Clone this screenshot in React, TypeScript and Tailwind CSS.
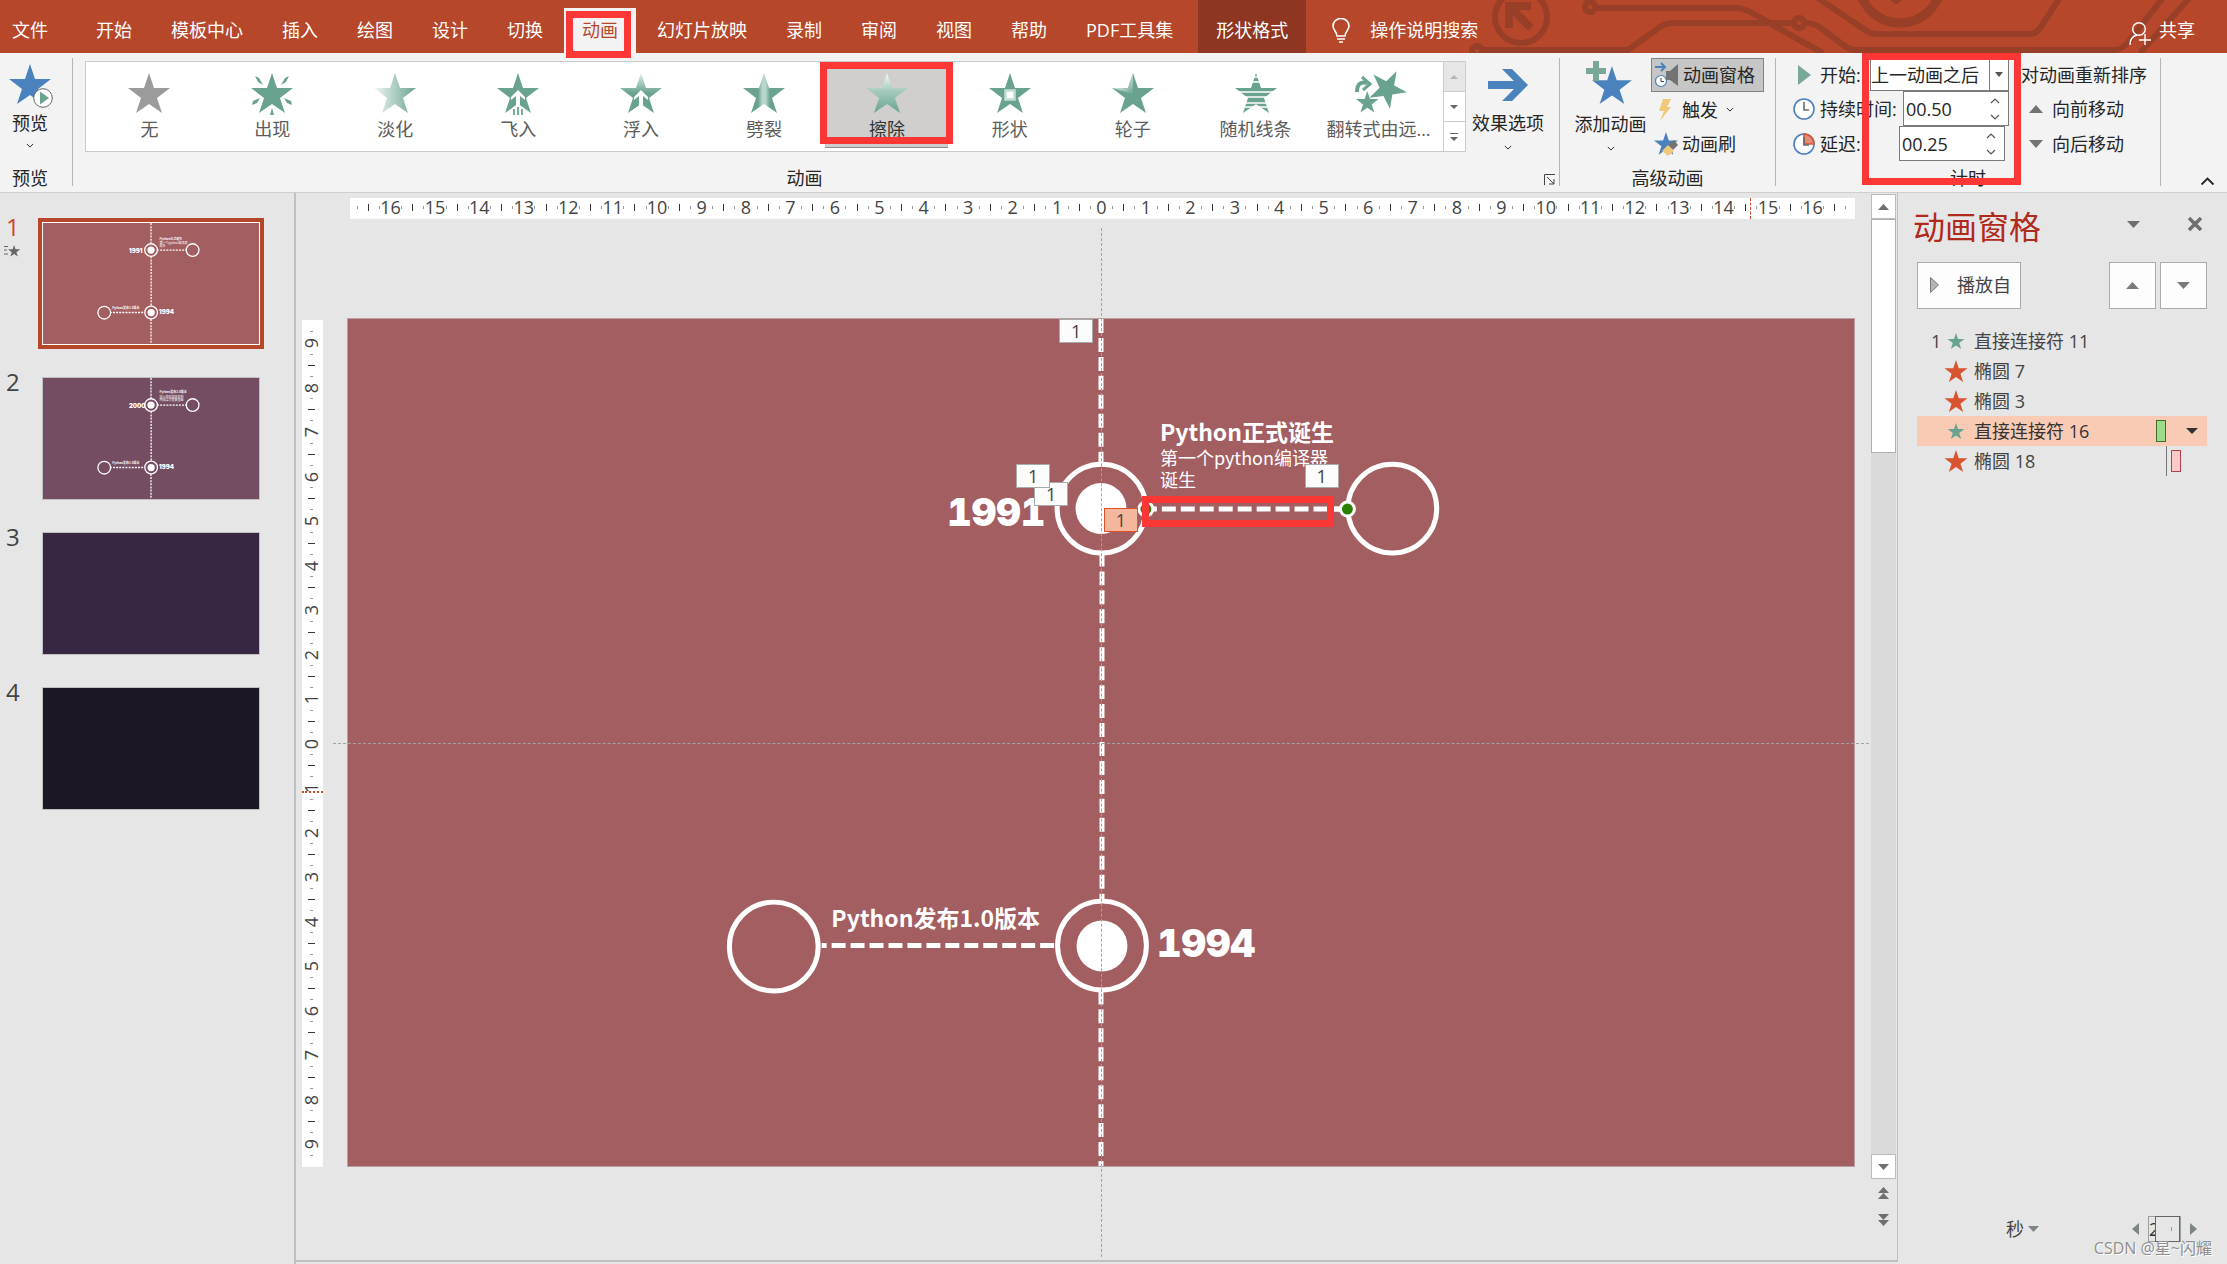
import React from "react";

const STAR = "21,0 26,15 42,15 29,25 34,40 21,31 8,40 13,25 0,15 16,15";
const GREEN = "#69a390";

function Star({ fill, className }: { fill: string; className: string }) {
  return (
    <svg viewBox="0 0 42 40" className={className} aria-hidden="true">
      <polygon points={STAR} fill={fill} />
    </svg>
  );
}

function Tri({ dir, className }: { dir: "up" | "down" | "left" | "right"; className: string }) {
  const points = {
    up: "0,10 5,0 10,10",
    down: "0,0 10,0 5,10",
    left: "10,0 10,10 0,5",
    right: "0,0 10,5 0,10",
  }[dir];
  return (
    <svg viewBox="0 0 10 10" preserveAspectRatio="none" className={className} aria-hidden="true">
      <polygon points={points} fill="currentColor" />
    </svg>
  );
}

function Chevron({ up, className }: { up?: boolean; className: string }) {
  return (
    <svg viewBox="0 0 10 6" className={className} fill="none" stroke="currentColor" strokeWidth="1.2" aria-hidden="true">
      <path d={up ? "M1 5 5 1 9 5" : "M1 1 5 5 9 1"} />
    </svg>
  );
}

type Effect = { name: string; art: React.ReactNode };

const plain = (fill: string) => <polygon points={STAR} fill={fill} />;

const EFFECTS: Effect[] = [
  { name: "无", art: plain("#9b9b9b") },
  {
    name: "出现",
    art: (
      <g fill={GREEN}>
        <polygon points={STAR} />
        <path d="M4 3 8 5 12 12 7 9ZM38 3 34 5 30 12 35 9ZM1 32 2 28 9 25 6 30ZM41 32 40 28 33 25 36 30ZM21 35 23 42H19Z" />
      </g>
    ),
  },
  {
    name: "淡化",
    art: (
      <>
        <defs>
          <linearGradient id="fade">
            <stop offset="0" stopColor="#f0f6f4" />
            <stop offset="1" stopColor={GREEN} />
          </linearGradient>
        </defs>
        {plain("url(#fade)")}
      </>
    ),
  },
  {
    name: "飞入",
    art: (
      <>
        {plain(GREEN)}
        <path d="M21 17 28 24V27L23 23V34H19V23L14 27V24Z" fill="#fff" />
        <path d="M15 35 21 31 27 35V42H15Z" fill="#fff" />
        <path d="M17 36V42M21 34V42M25 36V42" stroke={GREEN} strokeWidth="1.800" />
      </>
    ),
  },
  {
    name: "浮入",
    art: (
      <>
        <defs>
          <linearGradient id="float" x2="0" y2="1">
            <stop offset="0" stopColor="#e3efeb" />
            <stop offset=".5" stopColor={GREEN} />
          </linearGradient>
        </defs>
        {plain("url(#float)")}
        <path d="M21 17 28 24V27L23 23V33H19V23L14 27V24Z" fill="#fff" />
      </>
    ),
  },
  {
    name: "劈裂",
    art: (
      <>
        <defs>
          <linearGradient id="split">
            <stop offset=".36" stopColor={GREEN} />
            <stop offset=".46" stopColor="#b9d6cc" />
            <stop offset=".54" stopColor="#b9d6cc" />
            <stop offset=".64" stopColor={GREEN} />
          </linearGradient>
        </defs>
        {plain("url(#split)")}
      </>
    ),
  },
  {
    name: "擦除",
    art: (
      <>
        <defs>
          <linearGradient id="wipe" x2="0" y2="1">
            <stop offset="0" stopColor="#f4f8f6" />
            <stop offset=".45" stopColor="#a5cbbd" />
            <stop offset="1" stopColor={GREEN} />
          </linearGradient>
        </defs>
        {plain("url(#wipe)")}
      </>
    ),
  },
  {
    name: "形状",
    art: (
      <>
        {plain(GREEN)}
        <rect x="16.500" y="17.500" width="9" height="9" fill="#fff" stroke="#c5ddd5" strokeWidth="2.500" />
      </>
    ),
  },
  {
    name: "轮子",
    art: (
      <>
        <defs>
          <linearGradient id="wheel" x1="0" y1="0" x2="1" y2="1">
            <stop offset=".3" stopColor="#eaf3f0" />
            <stop offset="1" stopColor={GREEN} />
          </linearGradient>
        </defs>
        {plain(GREEN)}
        <path d="M21 0V21L0 15H16Z" fill="url(#wheel)" />
      </>
    ),
  },
  {
    name: "随机线条",
    art: (
      <>
        {plain(GREEN)}
        <path d="M0 4H42M0 9H42M0 19H42M0 24H42M0 30H42M0 34H42" stroke="#fff" strokeWidth="1.3" />
      </>
    ),
  },
  {
    name: "翻转式由远…",
    art: (
      <>
        <polygon points={STAR} fill={GREEN} transform="translate(10 -3) rotate(28 21 20) scale(.9)" />
        <polygon points={STAR} fill={GREEN} transform="translate(-2 18) scale(.54)" />
        <path d="M-1 19C-1 11 3 8 9 10" fill="none" stroke={GREEN} strokeWidth="4" />
        <path d="M4 4 12 11 5 17" fill="none" stroke={GREEN} strokeWidth="3" />
      </>
    ),
  },
];

const TABS = ["开始", "模板中心", "插入", "绘图", "设计", "切换", "动画", "幻灯片放映", "录制", "审阅", "视图", "帮助", "PDF工具集"];

function TitleBar() {
  return (
    <header className="relative flex h-[53px] bg-[#b7472a] text-white">
      <svg viewBox="0 0 767 53" className="absolute right-0 top-0 h-[53px] w-[767px]" fill="none" stroke="#993f28" strokeWidth="6" aria-hidden="true">
        <circle cx="61" cy="17" r="26" />
        <path d="M71 6H49V28M49 6 71 28" strokeWidth="8" />
        <circle cx="130" cy="7" r="5" />
        <path d="M136 8H275C290 8 298 18 363 53" />
        <path d="M22 50H168L200 27Q206 23 212 23H334" />
        <circle cx="17" cy="51" r="5" />
        <circle cx="339" cy="23" r="5" />
        <path d="M345 23Q355 23 362 29L386 47Q390 50 396 50H655Q662 50 670 40L705-5" />
        <path d="M352-6 405 30Q410 34 416 34H570Q576 34 580 28L605-10" />
        <path d="M680 53 732-5" />
        <circle cx="440" cy="-18" r="41" strokeWidth="9" />
        <path d="M428-4 436 2 448-6M454-2H462V-8" strokeWidth="4" />
      </svg>
      <nav className="relative flex gap-[3px]" aria-label="功能区选项卡">
        <button className="pb-3 pl-3 pr-[27px] pt-[18px] text-lg leading-6">文件</button>
        {TABS.map((t) =>
          t === "动画" ? (
            <button key={t} className="relative z-20 mt-2 bg-[#f3f3f3] px-[18px] pb-[11px] pt-[10px] text-lg leading-6 text-[#b7472a]">
              {t}
              <span className="absolute left-[2px] top-[3px] h-[47px] w-[65px] border-[7px] border-[#fd3735]" />
            </button>
          ) : (
            <button key={t} className="px-[18px] pb-3 pt-[18px] text-lg leading-6">{t}</button>
          ),
        )}
        <button className="ml-[4px] bg-[#8e3621] px-[18px] pb-3 pt-[18px] text-lg leading-6">形状格式</button>
        <button className="flex gap-5 pb-3 pl-[23px] pt-[18px] text-lg leading-6">
          <svg viewBox="0 0 18 25" className="h-[25px] w-[18px]" fill="none" stroke="#fff" strokeWidth="1.6" aria-hidden="true">
            <path d="M5 18C5 14 1 12 1 8A8 7.500 0 0 1 17 8C17 12 13 14 13 18ZM5 21H13M7 24H11" />
          </svg>
          操作说明搜索
        </button>
      </nav>
      <button className="relative ml-auto mr-8 flex gap-2 pb-3 pt-[18px] text-lg leading-6">
        <svg viewBox="0 0 22 24" className="mt-1 h-6 w-[22px]" fill="none" stroke="#fff" strokeWidth="1.4" aria-hidden="true">
          <circle cx="10" cy="7" r="6.300" />
          <path d="M1 23C1 17 4 14 8 13M16 12V23M10 18H22" />
        </svg>
        共享
      </button>
    </header>
  );
}

function GroupLabel({ children }: { children: React.ReactNode }) {
  return <div className="mb-px mt-auto text-center text-lg leading-[14px]">{children}</div>;
}

function Clock({ red }: { red?: boolean }) {
  return (
    <svg viewBox="0 0 22 22" className="size-[22px]" fill="none" strokeWidth="1.600" aria-hidden="true">
      <circle cx="11" cy="11" r="10" stroke="#4a82bd" fill="#fff" />
      {red && <path d="M11 1A10 10 0 0 1 21 11H11Z" fill="#e58c77" stroke="#d0573c" />}
      <path d="M11 4V12H16" stroke="#6b6b6b" />
    </svg>
  );
}

function Spinner({ id, value }: { id: string; value: string }) {
  return (
    <span className="flex h-[35px] w-[106px] items-center border border-[#7a7a7a] bg-white">
      <input id={id} defaultValue={value} className="w-[84px] pl-0.5 text-lg outline-none" />
      <span className="flex flex-col gap-2.5 pl-0.5 text-[#555]">
        <button className="flex" aria-label="增加"><Chevron up className="h-[6px] w-[10px]" /></button>
        <button className="flex" aria-label="减少"><Chevron className="h-[6px] w-[10px]" /></button>
      </span>
    </span>
  );
}

function Ribbon() {
  return (
    <section className="relative flex h-[140px] border-b border-[#cfcfcf] bg-[#f3f3f3] pb-[6px] pt-[5px] text-[#262626]">
      <div className="flex w-[73px] flex-col border-r border-[#b5b5b5] pr-3">
        <button className="flex flex-col items-center text-lg leading-6">
          <span className="relative mt-1.5 h-[47px] w-[42px]">
            <Star fill="#4a82bd" className="h-10 w-[42px]" />
            <svg viewBox="0 0 20 20" className="absolute -right-[2px] top-6 size-5" aria-hidden="true">
              <circle cx="10" cy="10" r="9.300" fill="#fff" stroke="#666" />
              <path d="M7 3.500V16.500L16 10Z" fill={GREEN} />
            </svg>
          </span>
          <span>预览</span>
          <Chevron className="mt-2 h-[5px] w-2" />
        </button>
        <GroupLabel>预览</GroupLabel>
      </div>

      <div className="relative flex min-w-0 flex-1 flex-col border-r border-[#b5b5b5] pl-3">
        <div className="flex">
          <div className="mt-[3px] flex h-[91px] min-w-0 flex-1 border border-[#cbcbcb] bg-white pl-[2px]">
            {EFFECTS.map((e, i) => (
              <button
                key={e.name}
                className={
                  i === 6
                    ? "relative mb-[3px] flex min-w-0 flex-1 flex-col items-center border-b border-[#8a8a8a] bg-[#d1cfcd] pt-[11px] text-lg leading-6 text-[#333]"
                    : "mb-[3px] flex min-w-0 flex-1 flex-col items-center pt-[11px] text-lg leading-6 text-[#5c5c5c]"
                }
              >
                <svg viewBox="0 0 42 42" className="h-[42px] w-[42px] shrink-0 overflow-visible" aria-hidden="true">{e.art}</svg>
                <span className="mt-[2px] whitespace-nowrap">{e.name}</span>
                {i === 6 && <span className="absolute -inset-x-[5px] top-0 h-[82px] border-[7px] border-[#fd3735]" />}
              </button>
            ))}
            <div className="ml-[3px] flex w-[22px] shrink-0 flex-col border-l border-[#cbcbcb]">
              <button aria-label="上一行" className="flex flex-1 items-center justify-center bg-[#e6e6e6] text-[#b5b5b5]"><Tri dir="up" className="h-1 w-2" /></button>
              <button aria-label="下一行" className="flex flex-1 items-center justify-center border-y border-[#cbcbcb] text-[#666]"><Tri dir="down" className="h-1 w-2" /></button>
              <button aria-label="其他" className="flex flex-1 flex-col items-center justify-center gap-[3px] text-[#666]">
                <span className="h-px w-2 bg-[#666]" />
                <Tri dir="down" className="h-1 w-2" />
              </button>
            </div>
          </div>
          <button className="flex w-[93px] flex-col items-center pr-[9px] text-lg leading-6">
            <svg viewBox="0 0 40 32" className="mb-[10px] mt-[11px] h-8 w-10" fill="#4a82bd" aria-hidden="true">
              <path d="M0 12H26L14 0H24L40 16 24 32H14L26 20H0Z" />
            </svg>
            效果选项
            <Chevron className="mt-[10px] h-[5px] w-2" />
          </button>
        </div>
        <div className="mb-px mt-auto flex items-end pr-1">
          <span className="flex-1 pr-5 text-center text-lg leading-[14px]">动画</span>
          <button aria-label="动画选项">
            <svg viewBox="0 0 11 11" className="size-[11px]" fill="none" stroke="#444" aria-hidden="true">
              <path d="M.5 11V.5H11M3 3 10 10M10 5V10H5" />
            </svg>
          </button>
        </div>
      </div>

      <div className="flex w-[216px] flex-col border-r border-[#b5b5b5]">
        <div className="flex">
          <button className="flex w-[91px] flex-col items-center pl-[10px] text-lg leading-6">
            <svg viewBox="0 0 46 44" className="mb-[7px] mr-1 mt-[3px] h-11 w-[46px]" aria-hidden="true">
              <polygon points={STAR} fill="#4a82bd" transform="translate(6 5) scale(.95)" />
              <path d="M7 0H13V7H20V13H13V20H7V13H0V7H7Z" fill="#79a898" />
            </svg>
            <span className="whitespace-nowrap">添加动画</span>
            <Chevron className="mt-[10px] h-[5px] w-2" />
          </button>
          <div className="flex flex-col items-start text-lg">
            <button className="flex h-[34px] items-center gap-1 border border-[#828282] bg-[#c6c6c6] pb-px pl-[3px] pr-2">
              <svg viewBox="0 0 24 26" className="h-[26px] w-6" fill="none" aria-hidden="true">
                <path d="M0 5H9M6 1 10 5 6 9" stroke="#4a82bd" strokeWidth="2" />
                <circle cx="6" cy="19" r="5.500" fill="#fff" stroke="#4a82bd" strokeWidth="1.200" />
                <path d="M6 16V19.500H9" stroke="#444" />
                <path d="M11 9H15L23 2V24L15 18H11Z" fill="#737373" />
              </svg>
              动画窗格
            </button>
            <button className="flex h-[35px] items-center gap-1 pl-[3px]">
              <svg viewBox="0 0 24 24" className="size-6" aria-hidden="true">
                <path d="M9 1H17L13 9H17L6 23 10 13H5Z" fill="#f0c879" />
              </svg>
              触发
              <Chevron className="ml-1 h-[5px] w-2" />
            </button>
            <button className="flex h-[34px] items-center gap-1 pl-[3px]">
              <svg viewBox="0 0 24 24" className="size-6" aria-hidden="true">
                <polygon points={STAR} fill="#4a82bd" transform="scale(.57)" />
                <path d="M14 13 20 8 24 13 19 18Z" fill="#737373" />
                <path d="M8 19 14 13 20 19 14 24Z" fill="#f0c879" />
              </svg>
              动画刷
            </button>
          </div>
        </div>
        <GroupLabel>高级动画</GroupLabel>
      </div>

      <div className="relative flex w-[385px] flex-col border-r border-[#b5b5b5] text-lg">
        <div className="flex gap-3 pl-[17px]">
          <div className="w-[216px]">
            <div className="flex h-[33px] items-center">
              <Tri dir="right" className="ml-[5px] h-5 w-[13px] text-[#79a898]" />
              <label htmlFor="start" className="ml-[9px] flex-1 whitespace-nowrap">开始:</label>
              <span className="relative">
                <select id="start" className="h-[33px] w-[139px] appearance-none border border-[#7a7a7a] bg-white" defaultValue="after">
                  <option value="after">上一动画之后</option>
                </select>
                <span className="pointer-events-none absolute inset-y-0 right-0 flex w-5 items-center justify-center border border-[#7a7a7a]">
                  <Tri dir="down" className="h-[5px] w-2 text-[#555]" />
                </span>
              </span>
            </div>
            <div className="flex h-[35px] items-center">
              <Clock />
              <label htmlFor="duration" className="ml-[5px] flex-1 whitespace-nowrap">持续时间:</label>
              <Spinner id="duration" value="00.50" />
            </div>
            <div className="flex h-[35px] items-center pr-1">
              <Clock red />
              <label htmlFor="delay" className="ml-[5px] flex-1 whitespace-nowrap">延迟:</label>
              <Spinner id="delay" value="00.25" />
            </div>
          </div>
          <div className="flex flex-col items-start">
            <span className="flex h-[33px] items-center whitespace-nowrap">对动画重新排序</span>
            <button className="flex h-[35px] items-center gap-[9px] pl-2"><Tri dir="up" className="h-2 w-[14px] text-[#737373]" />向前移动</button>
            <button className="flex h-[35px] items-center gap-[9px] pl-2"><Tri dir="down" className="h-2 w-[14px] text-[#737373]" />向后移动</button>
          </div>
        </div>
        <GroupLabel>计时</GroupLabel>
        <span className="pointer-events-none absolute -top-[5px] left-[86px] h-[132px] w-[159px] border-[7px] border-[#fd3735]" />
      </div>

      <div className="flex w-[66px] items-end justify-end pr-3">
        <button aria-label="折叠功能区"><Chevron up className="h-[9px] w-[15px]" /></button>
      </div>
    </section>
  );
}

type Label = { text: string; x: number; y: number; kind: "year" | "title" | "body" };

const SLIDE_W = 1508;
const SLIDE_H = 849;

const second: Label[] = [
  { text: "Python发布1.0版本", x: 484, y: 582, kind: "title" },
  { text: "1994", x: 810, y: 606, kind: "year" },
];

const LABELS: Record<number, Label[]> = {
  1: [
    { text: "1991", x: 600, y: 174, kind: "year" },
    { text: "Python正式诞生", x: 813, y: 95, kind: "title" },
    { text: "第一个python编译器", x: 813, y: 127, kind: "body" },
    { text: "诞生", x: 813, y: 149, kind: "body" },
    ...second,
  ],
  2: [
    { text: "2000", x: 600, y: 174, kind: "year" },
    { text: "Python发布2.0版本", x: 813, y: 87, kind: "title" },
    { text: "加入内存回收机制", x: 813, y: 118, kind: "body" },
    { text: "构成语言框架基础", x: 813, y: 141, kind: "body" },
    ...second,
  ],
};

const LARGE = {
  year: "font-[Inter] text-[38px] font-black leading-[38px] tabular-nums",
  title: "font-['Noto_Sans_CJK_SC',sans-serif] text-[23px] font-bold leading-[34px]",
  body: "font-['Noto_Sans_CJK_SC',sans-serif] text-lg leading-[22px]",
};
const SMALL = {
  year: "font-[Inter] text-[6px] font-black leading-[6px]",
  title: "font-['Noto_Sans_CJK_SC',sans-serif] text-[3px] font-bold leading-[5px]",
  body: "font-['Noto_Sans_CJK_SC',sans-serif] text-[3px] leading-[4px]",
};

function Timeline({ slide, large }: { slide: number; large?: boolean }) {
  const sizes = large ? LARGE : SMALL;
  return (
    <>
      <svg viewBox={`0 0 ${SLIDE_W} ${SLIDE_H}`} className="absolute inset-0 size-full" fill="none" stroke="#fff" strokeWidth={large ? 5 : 9} aria-hidden="true">
        <g strokeDasharray={large ? "14 5" : "14 8"}>
          <path d="M754 0V144" />
          <path d="M755 236V583" strokeDashoffset="2" />
          <path d="M754 673V849" />
          <path d="M801 190.500H1000" strokeDashoffset="5" />
          <path d="M474 628H708" strokeDashoffset="9" />
        </g>
        <circle cx="754.500" cy="190" r="44.500" />
        <circle cx="1046" cy="190" r="44.500" />
        <circle cx="755" cy="628" r="44.500" />
        <circle cx="426" cy="629" r="44.500" />
        <g fill="#fff" stroke="none">
          <circle cx="754" cy="190" r="25.500" />
          <circle cx="755" cy="628.500" r="25.500" />
        </g>
      </svg>
      {LABELS[slide].map((l) => (
        <span
          key={l.text}
          className={`absolute whitespace-nowrap text-white ${sizes[l.kind]}`}
          style={{ left: `${(l.x / SLIDE_W) * 100}%`, top: `${(l.y / SLIDE_H) * 100}%` }}
        >
          {l.text}
        </span>
      ))}
    </>
  );
}

const THUMBS = [
  { n: 1, bg: "bg-[#a35e62]" },
  { n: 2, bg: "bg-[#744d62]" },
  { n: 3, bg: "bg-[#382743]" },
  { n: 4, bg: "bg-[#1d1724]" },
];

function Thumbnails() {
  return (
    <aside className="flex w-[296px] flex-col gap-8 border-r-2 border-[#c0c0c0] pt-[29px]" aria-label="幻灯片">
      {THUMBS.map(({ n, bg }) => (
        <div key={n} className="flex">
          <div className={n === 1 ? "w-[42px] pl-[6px] text-2xl leading-none text-[#d24726]" : "w-[42px] pl-[6px] text-2xl leading-none text-[#444]"}>
            <div className="-mt-[7px]">{n}</div>
            {n === 1 && (
              <svg viewBox="0 0 16 12" className="-ml-0.5 mt-1.5 h-3 w-4" aria-hidden="true">
                <path d="M0 1.500H4M0 5H3M0 9H4" stroke="#666" />
                <polygon points={STAR} fill="#666" transform="translate(4 0) scale(.29)" />
              </svg>
            )}
          </div>
          <button
            aria-label={`幻灯片 ${n}`}
            className={`relative h-[123px] w-[218px] overflow-hidden border ${bg} ${n === 1 ? "border-white outline-4 outline-[#b7472a]" : "border-[#c0c0c0]"}`}
          >
            {n < 3 && <Timeline slide={n} />}
          </button>
        </div>
      ))}
    </aside>
  );
}

/* Quarter-centimetre marks counted from the middle of the ruler. */
function marks(quarters: number) {
  return Array.from({ length: quarters * 2 + 1 }, (_, i) => i - quarters);
}

function RulerMark({ q, max, vertical }: { q: number; max: number; vertical?: boolean }) {
  const a = Math.abs(q);
  if (a % 4 === 0) {
    if (a / 4 > max) return null;
    return <span className={vertical ? "-rotate-90" : ""}>{a / 4}</span>;
  }
  if (a % 2 === 0) return <span className={vertical ? "h-px w-[7px] bg-[#333]" : "h-[7px] w-px bg-[#333]"} />;
  return <span className={vertical ? "h-px w-[3px] bg-[#999]" : "h-[3px] w-px bg-[#999]"} />;
}

function HorizontalRuler() {
  return (
    <div className="relative col-start-2 ml-[3px] flex h-[21px] items-center justify-center bg-white pb-[3px] pr-0.5 text-lg leading-none text-[#444]">
      {marks(67).map((q) => (
        <span key={q} className="flex w-[0.74%] shrink-0 items-center justify-center">
          <RulerMark q={q} max={16} />
        </span>
      ))}
      <span className="absolute inset-y-0 left-[93%] border-l border-dashed border-[#d24726]" />
    </div>
  );
}

function VerticalRuler() {
  return (
    <div className="relative flex flex-col items-center justify-center bg-white pr-0.5 text-lg leading-none text-[#444]">
      {marks(37).map((q) => (
        <span key={q} className="flex h-[1.315%] shrink-0 items-center justify-center">
          <RulerMark q={q} max={9} vertical />
        </span>
      ))}
      <span className="absolute inset-x-0 top-[55.600%] border-t-2 border-dotted border-[#d24726]" />
    </div>
  );
}

const BADGES = [
  { x: 687, y: 163, tone: "border-[#a5abab] bg-[#fcfcfc]" },
  { x: 669, y: 145, tone: "border-[#a5abab] bg-[#fcfcfc]" },
  { x: 712, y: 0, tone: "border-[#a5abab] bg-[#fcfcfc]" },
  { x: 958, y: 145, tone: "border-[#a5abab] bg-[#fcfcfc]" },
  { x: 757, y: 189, tone: "border-[#d8532a] bg-[#f4b79d]" },
];

const pct = (x: number, y: number) => ({ left: `${(x / SLIDE_W) * 100}%`, top: `${(y / SLIDE_H) * 100}%` });

function Canvas() {
  return (
    <div className="grid flex-1 grid-cols-[21px_1fr] content-start gap-x-6 pl-[6px] pr-4 pt-[5px]">
      <HorizontalRuler />
      <div className="mt-[99px] grid pt-0.5"><VerticalRuler /></div>
      <div className="relative mt-[99px] aspect-[1508/849] border border-[#b9a0a2] bg-[#a35e62]">
        <Timeline slide={1} large />
        <svg viewBox={`0 0 ${SLIDE_W} ${SLIDE_H}`} className="absolute inset-0 size-full" aria-hidden="true">
          <path d="M985 190.500H1000" stroke="#fff" strokeWidth="5" />
          <g fill="#2a8000" stroke="#fff" strokeWidth="3">
            <circle cx="799" cy="190.500" r="7" />
            <circle cx="1001" cy="190.500" r="7" />
          </g>
        </svg>
        <span className="absolute h-[31px] w-[192px] border-[7px] border-[#fd3735]" style={pct(795, 177)} />
        <span className="absolute -bottom-[91px] -top-[91px] left-1/2 border-l border-dashed border-[#a3a3a3]" />
        <span className="absolute -left-[15px] -right-[15px] top-1/2 border-t border-dashed border-[#a3a3a3]" />
        {BADGES.map((b) => (
          <button key={b.x} className={`absolute h-6 w-[34px] border text-lg leading-5 text-[#444] ${b.tone} ${b.x === 669 ? "z-10" : ""}`} style={pct(b.x, b.y)}>
            1
          </button>
        ))}
      </div>
    </div>
  );
}

function ScrollBar() {
  return (
    <div className="flex w-[26px] flex-col pt-px text-[#6f6f6f]">
      <button aria-label="向上滚动" className="flex h-[25px] w-[25px] items-center justify-center border border-[#bcbcbc] bg-white"><Tri dir="up" className="h-[6px] w-[11px]" /></button>
      <div className="w-[25px] flex-1 bg-[#dadada]"><div className="h-1/4 border border-[#b0b0b0] bg-white" /></div>
      <button aria-label="向下滚动" className="flex h-[25px] w-[25px] items-center justify-center border border-[#bcbcbc] bg-white"><Tri dir="down" className="h-[6px] w-[11px]" /></button>
      <button aria-label="上一张幻灯片" className="flex h-[27px] w-[25px] flex-col items-center justify-center"><Tri dir="up" className="h-[6px] w-[11px]" /><Tri dir="up" className="h-[6px] w-[11px]" /></button>
      <button aria-label="下一张幻灯片" className="mb-[27px] flex h-[27px] w-[25px] flex-col items-center justify-center"><Tri dir="down" className="h-[6px] w-[11px]" /><Tri dir="down" className="h-[6px] w-[11px]" /></button>
    </div>
  );
}

const ROWS = [
  { order: "1", name: "直接连接符 11", entrance: true },
  { order: "", name: "椭圆 7", entrance: false },
  { order: "", name: "椭圆 3", entrance: false },
  { order: "", name: "直接连接符 16", entrance: true },
  { order: "", name: "椭圆 18", entrance: false },
];

function AnimationPane() {
  return (
    <aside className="relative flex w-[329px] flex-col pb-5 pl-[19px] pr-5 text-lg text-[#444]">
      <div className="-ml-1 mt-[10px] flex h-12 items-center">
        <h2 className="flex-1 text-[32px] leading-[48px] text-[#b02a1c]">动画窗格</h2>
        <button aria-label="窗格选项" className="mb-1.5 mr-12"><Tri dir="down" className="h-[7px] w-[13px] text-[#6f6f6f]" /></button>
        <button aria-label="关闭" className="mb-1.5 mr-[5px]">
          <svg viewBox="0 0 14 14" className="size-[14px]" stroke="#6f6f6f" strokeWidth="3.500" aria-hidden="true"><path d="M1 1 13 13M13 1 1 13" /></svg>
        </button>
      </div>
      <div className="mt-[11px] flex h-[47px] gap-1">
        <button className="flex w-[104px] items-center gap-[18px] border border-[#ababab] bg-[#fdfdfd] pb-0.5 pl-3">
          <svg viewBox="0 0 9 16" className="h-4 w-[9px]" aria-hidden="true"><path d="M.5.5V15.500L8.500 8Z" fill="#b5b5b5" stroke="#777" /></svg>
          播放自
        </button>
        <button aria-label="上移" className="ml-auto flex w-[47px] items-center justify-center border border-[#ababab] bg-[#fdfdfd]"><Tri dir="up" className="h-[7px] w-[13px] text-[#7a7a7a]" /></button>
        <button aria-label="下移" className="flex w-[47px] items-center justify-center border border-[#ababab] bg-[#fdfdfd]"><Tri dir="down" className="h-[7px] w-[13px] text-[#7a7a7a]" /></button>
      </div>
      <ul className="mt-[17px]">
        {ROWS.map((r, i) => (
          <li key={r.name} className={i === 3 ? "flex h-[30px] items-center bg-[#facbb4] text-[#333]" : "flex h-[30px] items-center"}>
            <span className="w-[27px] pl-[14px]">{r.order}</span>
            <span className="flex w-[30px] justify-start">
              <span className="flex w-6 justify-center">
                {r.entrance ? <Star fill={GREEN} className="h-4 w-[18px]" /> : <Star fill="#d8532f" className="h-[22px] w-6" />}
              </span>
            </span>
            <span className="flex-1">{r.name}</span>
            {i === 3 && (
              <span className="flex w-[51px] items-center justify-between pr-[9px]">
                <span className="h-[22px] w-[10px] border border-[#3f6d2f] bg-[#9ddb87]" />
                <Tri dir="down" className="h-[6px] w-3 text-[#333]" />
              </span>
            )}
            {i === 4 && (
              <span className="flex h-full w-[41px] items-center border-l border-[#777] pl-1">
                <span className="h-[22px] w-[10px] border border-[#b8424a] bg-[#fdc9c9]" />
              </span>
            )}
          </li>
        ))}
      </ul>
      <div className="mt-auto flex h-[30px] items-center pr-[10px]">
        <button className="ml-[89px] flex items-center gap-1">秒<Tri dir="down" className="h-[6px] w-[11px] text-[#7f8585]" /></button>
        <button aria-label="向左" className="ml-auto"><Tri dir="left" className="h-3 w-[7px] text-[#7f8585]" /></button>
        <span className="relative mx-[9px] h-[26px] w-[33px] border border-[#9a9f9f] leading-6 text-[#333]">
          2<span className="absolute -top-px left-[6px] flex h-[26px] w-[25px] items-center justify-center border border-[#666] bg-[#e6e6e6]"><span className="ml-2 h-1 w-px bg-[#999]" /></span>
        </span>
        <button aria-label="向右"><Tri dir="right" className="h-3 w-[7px] text-[#7f8585]" /></button>
      </div>
      <span className="absolute bottom-1 right-[15px] whitespace-nowrap text-base leading-6 text-[#8f8f8f] [text-shadow:1px_1px_0_#fff]">CSDN @星~闪耀</span>
    </aside>
  );
}

export default function App() {
  return (
    <div className="flex min-h-screen flex-col bg-[#e6e6e6] font-['Open_Sans','Noto_Sans_CJK_SC',sans-serif]">
      <TitleBar />
      <Ribbon />
      <main className="flex flex-1">
        <Thumbnails />
        <section className="mb-[2px] flex flex-1 border-b-2 border-r border-[#c0c0c0]" aria-label="幻灯片编辑区">
          <Canvas />
          <ScrollBar />
        </section>
        <AnimationPane />
      </main>
    </div>
  );
}
